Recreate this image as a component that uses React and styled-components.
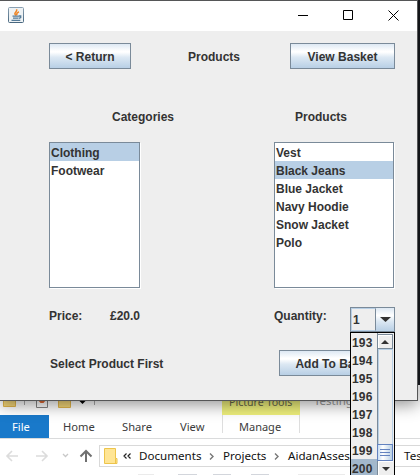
import React from "react";
import styled, { createGlobalStyle } from "styled-components";

const Global = createGlobalStyle`
  * { box-sizing: border-box; }
  html, body { margin: 0; overflow: hidden; }
`;

const Desktop = styled.div`
  position: relative;
  width: 420px;
  height: 475px;
  overflow: hidden;
  padding-top: 385px;
  background: #17191e;
  white-space: nowrap;
`;

/* ---------- Java dialog ---------- */
const Dialog = styled.div`
  position: absolute;
  left: 0;
  top: 0;
  width: 418px;
  height: 401px;
  display: flex;
  flex-direction: column;
  border: 1px solid #555657;
  border-left: 0;
  background: #eeeeee;
  box-shadow: 0 4px 15px rgba(0, 0, 0, 0.42);
  font: bold 12px/14px "Liberation Sans", Arial, sans-serif;
  color: #333333;
`;

const TitleBar = styled.div`
  height: 30px;
  flex: none;
  display: flex;
  align-items: center;
  justify-content: space-between;
  padding: 0 17px 2px 8px;
  background: #fff;
`;

const Controls = styled.div`
  display: flex;
  gap: 34px;
  padding-right: 1px;
  svg { display: block; }
`;

const Form = styled.div`
  display: flex;
  flex-direction: column;
  padding: 12px 22px 0 49px;
`;

const Row = styled.div`
  display: flex;
  height: ${(p) => p.$h}px;
  margin-top: ${(p) => p.$mt || 0}px;
  align-items: ${(p) => p.$align || "center"};
`;

const Label = styled.span`
  margin-left: ${(p) => p.$ml || 0}px;
  padding-top: ${(p) => p.$pt || 0}px;
  width: ${(p) => (p.$w ? `${p.$w}px` : "auto")};
  flex: none;
`;

const Button = styled.button`
  width: ${(p) => p.$w}px;
  height: 26px;
  flex: none;
  margin-left: ${(p) => (p.$end ? "auto" : 0)};
  padding: 1px 0 0;
  border: 1px solid #7a8a99;
  background: linear-gradient(#dde8f3 0, #fff 30%, #fff 34%, #dce8f3 55%, #b8cfe5 100%);
  font: inherit;
  color: inherit;
`;

const List = styled.div`
  width: ${(p) => p.$w}px;
  height: 146px;
  flex: none;
  margin: ${(p) => (p.$end ? "0 1px 0 auto" : 0)};
  border: 1px solid #7a8a99;
  background: #fff;
  box-shadow: 1px 1px 0 #fff;
`;

const Item = styled.div`
  height: 18px;
  padding: 3px 0 0 1px;
  background: ${(p) => (p.$on ? "#b8cfe5" : "transparent")};
`;

const Combo = styled.div`
  position: relative;
  display: flex;
  width: 45px;
  height: 25px;
  margin-left: auto;
  border: 1px solid #7a8a99;
`;

const ComboValue = styled.div`
  width: 25px;
  padding: 4px 0 0 1px;
  border: 1px solid #b8cfe5;
  border-right: 1px solid #7a8a99;
`;

const ComboArrow = styled.div`
  flex: 1;
  display: flex;
  align-items: center;
  justify-content: center;
  background: linear-gradient(#dde8f3 0, #fff 32%, #dce8f3 58%, #b8cfe5 100%);
`;

const Popup = styled.div`
  position: absolute;
  z-index: 2;
  left: -1px;
  top: 24px;
  width: 45px;
  height: 150px;
  display: flex;
  border: 1px solid #000;
  background: #eeeeee;
`;

const Options = styled.div`
  flex: 1;
`;

const Option = styled.div`
  height: 18px;
  padding: 3px 0 0 1px;
  letter-spacing: 0.2px;
  background: ${(p) => (p.$on ? "#a3b8cc" : "transparent")};
`;

const ScrollBar = styled.div`
  width: 17px;
  display: flex;
  flex-direction: column;
  padding-right: 1px;
  border-left: 1px solid #7a8a99;
`;

const ScrollButton = styled.div`
  height: 15px;
  flex: none;
  display: flex;
  align-items: center;
  justify-content: center;
  margin-top: ${(p) => (p.$up ? 1 : 0)}px;
  border: solid #7a8a99;
  border-width: ${(p) => (p.$up ? "1px 1px 1px 0" : "0")};
  box-shadow: inset 1px 1px 0 #fff;
  background: #eeeeee;
`;

const Track = styled.div`
  height: 95px;
  flex: none;
  border: 1px solid #b8cfe5;
  border-width: 1px 1px 0 1px;
`;

const Thumb = styled.div`
  height: 17px;
  flex: none;
  display: flex;
  flex-direction: column;
  justify-content: center;
  gap: 2px;
  padding: 0 2px;
  border: 1px solid #6382bf;
  margin-left: -1px;
  background: linear-gradient(90deg, #c8ddf2, #fff 35%, #b8cfe5);
`;

const Grip = styled.i`
  height: 1px;
  background: #6382bf;
`;

/* ---------- Explorer behind the dialog ---------- */
const Explorer = styled.div`
  height: 90px;
  background: #fff;
  color: #333;
  font: 12px/16px "Noto Sans", "Open Sans", sans-serif;
`;

const ExplorerTitle = styled.div`
  height: 30px;
  display: flex;
  align-items: flex-start;
  padding: 5px 0 0 3px;
`;

const ContextTitle = styled.div`
  width: 78px;
  height: 25px;
  margin-left: 126px;
  padding: 4px 0 0 7px;
  background: #eff07c;
  color: #66664a;
  font-size: 10.6px;
`;

const WindowTitle = styled.div`
  padding: 3px 0 0 14px;
  color: #999;
  font-size: 11.5px;
`;

const Tabs = styled.div`
  height: 24px;
  display: flex;
  border-bottom: 1px solid #dadbdc;
`;

const Tab = styled.div`
  width: ${(p) => p.$w}px;
  height: 23px;
  padding: 4px 0 0 ${(p) => p.$pl}px;
  font-size: ${(p) => p.$fs || 11.2}px;
  color: ${(p) => (p.$file ? "#fff" : "#3b3b3b")};
  background: ${(p) => (p.$file ? "#1979ca" : "transparent")};
`;

const ContextTab = styled(Tab)`
  height: 18px;
  border: 1px solid #dedede;
  border-width: 0 1px;
`;

const NavRow = styled.div`
  display: flex;
  height: 22px;
  margin-top: 6px;
`;

const NavIcons = styled.svg`
  width: 99px;
  height: 22px;
  flex: none;
`;

const Address = styled.div`
  flex: 1;
  min-width: 0;
  overflow: hidden;
  display: flex;
  align-items: center;
  padding-left: 4px;
  border: 1px solid #d9d9d9;
  border-right: 0;
  color: #111;
  font-size: 11.6px;
  > * { flex: none; }
`;

const Crumb = styled.span`
  width: ${(p) => p.$w}px;
`;

const Chevron = styled.svg`
  width: 5px;
  height: 7px;
  margin: 1px 9px 0 0;
`;

const FileStrip = styled.svg`
  display: block;
  width: 420px;
  height: 1px;
  margin-top: 7px;
`;

const Sep = () => (
  <Chevron viewBox="0 0 5 7">
    <path d="M1 .5L4 3.5L1 6.5" fill="none" stroke="#777" strokeWidth="1.4" />
  </Chevron>
);

const JavaIcon = () => (
  <svg width="16" height="16" viewBox="0 0 16 16">
    <defs>
      <linearGradient id="tile" x1="0" y1="0" x2="0" y2="1">
        <stop offset="0" stopColor="#8aa0b2" />
        <stop offset="1" stopColor="#48677f" />
      </linearGradient>
    </defs>
    <rect x=".5" y=".5" width="15" height="15" rx="1" fill="#eef2f4" stroke="url(#tile)" />
    <path d="M8.2 8.3C4.5 6.5 9.8 5 8.6 2.3M9.2 8C8 6.7 9.2 6 10.8 4.7" fill="none" stroke="#ef8424" strokeWidth="1.5" />
    <path d="M4.5 9.2h6.5M5 11.2h5.5M11 9h1.7v1.5L11 11.3M3.5 13.3h8.8" fill="none" stroke="#557b98" strokeWidth="1.3" />
  </svg>
);

const Triangle = ({ up, w = 11, h = 5 }) => (
  <svg width={w} height={h} viewBox="0 0 10 5" preserveAspectRatio="none">
    <path d={up ? "M0 5L5 0L10 5Z" : "M0 0H10L5 5Z"} fill="#333" />
  </svg>
);

const products = ["Vest", "Black Jeans", "Blue Jacket", "Navy Hoodie", "Snow Jacket", "Polo"];
const quantities = [193, 194, 195, 196, 197, 198, 199, 200];

export default function App() {
  return (
    <Desktop>
      <Global />
      <Explorer>
        <ExplorerTitle>
          <svg width="93" height="20" viewBox="0 0 93 20">
            <path d="M.5 1V16.5H12.5V1M55.5 1V17.5H67.5V1" fill="#f5d778" stroke="#e3b74c" />
            <path d="M21.5 8V15M91.5 8V15" stroke="#aaa" />
            <path d="M33.5 1V17.5H44.5V1" fill="#fff" stroke="#858585" />
            <path d="M35 10l2.5 3h3l2.5-3" fill="#e46a34" />
            <path d="M76.5 11h6l-3 3z" fill="#000" />
          </svg>
          <ContextTitle>Picture Tools</ContextTitle>
          <WindowTitle>Testing</WindowTitle>
        </ExplorerTitle>
        <Tabs>
          <Tab $file $w={49} $pl={12}>File</Tab>
          <Tab $w={58} $pl={14}>Home</Tab>
          <Tab $w={58} $pl={15}>Share</Tab>
          <Tab $w={57} $pl={15}>View</Tab>
          <ContextTab $w={78} $pl={16} $fs={11}>Manage</ContextTab>
        </Tabs>
        <NavRow>
          <NavIcons viewBox="0 0 99 22" fill="none">
            <path d="M18 11H7M12 6L7 11L12 16M36 11H47M42 6L47 11L42 16" stroke="#dcdcdc" strokeWidth="1.6" />
            <path d="M63 9L65.5 11.5L68 9" stroke="#c8c8c8" strokeWidth="1.3" />
            <path d="M86 17V6M80.5 11.5L86 6L91.5 11.5" stroke="#707070" strokeWidth="2" />
          </NavIcons>
          <Address>
            <svg width="14" height="18" viewBox="0 0 14 18">
              <path d="M.5 1.5H11.5V11.5H13V16.5H.5Z" fill="#ffe594" stroke="#edc44b" />
              <path d="M11.5 11.5V16.5" stroke="#edc44b" />
            </svg>
            <svg width="21" height="8" viewBox="0 0 21 8">
              <path d="M8.5 1.5L6 4L8.5 6.5M12.5 1.5L10 4L12.5 6.5" fill="none" stroke="#222" strokeWidth="1.2" />
            </svg>
            <Crumb $w={70}>Documents</Crumb>
            <Sep />
            <Crumb $w={51}>Projects</Crumb>
            <Sep />
            <Crumb $w={116}>AidanAssessment</Crumb>
            <Crumb>Testing</Crumb>
          </Address>
        </NavRow>
        <FileStrip viewBox="0 0 420 1">
          <path d="M138 .5H154M298 .5H345" stroke="#ebebeb" />
          <path d="M178 .5H197M213 .5H231M251 .5H269" stroke="#d3d6dc" />
        </FileStrip>
      </Explorer>

      <Dialog>
        <TitleBar>
          <JavaIcon />
          <Controls>
            <svg width="11" height="11" viewBox="0 0 11 11"><path d="M0 5.5H10" stroke="#000" /></svg>
            <svg width="11" height="11" viewBox="0 0 11 11"><path d="M.5 .5H9.5V9.5H.5Z" fill="none" stroke="#000" /></svg>
            <svg width="11" height="11" viewBox="0 0 11 11"><path d="M.5 .5L10.5 10.5M10.5 .5L.5 10.5" stroke="#000" /></svg>
          </Controls>
        </TitleBar>
        <Form>
          <Row $h={26}>
            <Button $w={82}>&lt; Return</Button>
            <Label $ml={57} $pt={1}>Products</Label>
            <Button $w={105} $end>View Basket</Button>
          </Row>
          <Row $h={14} $mt={41}>
            <Label $ml={63} $w={183}>Categories</Label>
            <Label>Products</Label>
          </Row>
          <Row $h={146} $mt={18}>
            <List $w={91}>
              <Item $on>Clothing</Item>
              <Item>Footwear</Item>
            </List>
            <List $w={120} $end>
              {products.map((name) => (
                <Item key={name} $on={name === "Black Jeans"}>{name}</Item>
              ))}
            </List>
          </Row>
          <Row $h={25} $mt={19} $align="flex-start">
            <Label $w={61} $pt={2}>Price:</Label>
            <Label $w={164} $pt={2}>£20.0</Label>
            <Label $pt={2}>Quantity:</Label>
            <Combo>
              <ComboValue>1</ComboValue>
              <ComboArrow><Triangle /></ComboArrow>
              <Popup>
                <Options>
                  {quantities.map((q) => (
                    <Option key={q} $on={q === 200}>{q}</Option>
                  ))}
                </Options>
                <ScrollBar>
                  <ScrollButton $up><Triangle up w={8} h={4} /></ScrollButton>
                  <Track />
                  <Thumb><Grip /><Grip /><Grip /></Thumb>
                  <ScrollButton><Triangle w={8} h={4} /></ScrollButton>
                </ScrollBar>
              </Popup>
            </Combo>
          </Row>
          <Row $h={26} $mt={18}>
            <Label $ml={1} $pt={2}>Select Product First</Label>
            <Button $w={116} $end>Add To Basket</Button>
          </Row>
        </Form>
      </Dialog>
    </Desktop>
  );
}
